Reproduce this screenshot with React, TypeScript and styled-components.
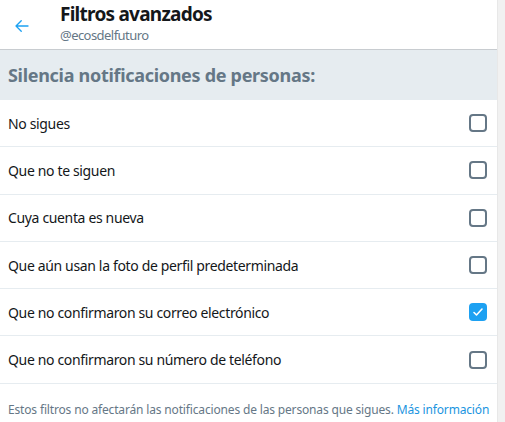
import React from "react";
import styled, { createGlobalStyle } from "styled-components";

const Global = createGlobalStyle`
  html, body { margin: 0; padding: 0; background: #fff; }
  body { font-family: "Noto Sans", "Open Sans", sans-serif; overflow: hidden; }
  * { box-sizing: border-box; }
`;

const Frame = styled.div`
  display: flex;
  width: 505px;
  height: 422px;
`;

const Main = styled.div`
  flex: 1;
  display: flex;
  flex-direction: column;
  min-width: 0;
  & > * { flex-shrink: 0; }
`;

const Scrollbar = styled.div`
  width: 8px;
  background: #f1f1f1;
  border-left: 1px solid #e8e8e8;
`;

const Header = styled.header`
  display: flex;
  align-items: center;
  height: 50px;
  border-bottom: 1px solid #c8ccd0;
  padding-left: 10px;
`;

const BackButton = styled.div`
  width: 24px;
  height: 24px;
  display: flex;
  align-items: center;
  justify-content: center;
  margin-right: 26px;
  margin-top: 2px;
`;

const TitleBlock = styled.div`
  display: flex;
  flex-direction: column;
  align-self: flex-start;
  padding-top: 2px;
`;

const Title = styled.div`
  font-size: 19px;
  font-weight: 700;
  color: #14171a;
  line-height: 24px;
  letter-spacing: -0.75px;
`;

const Handle = styled.div`
  font-size: 13px;
  color: #657786;
  line-height: 18px;
  letter-spacing: -0.55px;
`;

const SectionHead = styled.div`
  background: #e6ecf0;
  height: 50px;
  display: flex;
  align-items: center;
  padding-left: 8px;
  font-size: 18px;
  font-weight: 700;
  color: #657786;
  letter-spacing: -0.3px;
`;

const Row = styled.div`
  display: flex;
  align-items: center;
  justify-content: space-between;
  height: 47.3px;
  border-bottom: 1px solid #e6ecf0;
  padding: 0 10px 0 8px;
  font-size: 14px;
  color: #14171a;
  letter-spacing: -0.35px;
`;

const Box = styled.div<{ $checked?: boolean }>`
  width: 18px;
  height: 18px;
  border-radius: 4px;
  border: ${(p) => (p.$checked ? "none" : "2px solid #657786")};
  background: ${(p) => (p.$checked ? "#1da1f2" : "#fff")};
  display: flex;
  align-items: center;
  justify-content: center;
`;

const Footer = styled.div`
  padding: 17px 8px;
  font-size: 12px;
  color: #657786;
  white-space: nowrap;
  letter-spacing: -0.16px;
`;

const Link = styled.span`
  color: #1b95e0;
`;

const items = [
  { label: "No sigues", checked: false },
  { label: "Que no te siguen", checked: false },
  { label: "Cuya cuenta es nueva", checked: false },
  { label: "Que aún usan la foto de perfil predeterminada", checked: false },
  { label: "Que no confirmaron su correo electrónico", checked: true },
  { label: "Que no confirmaron su número de teléfono", checked: false },
];

export default function App() {
  return (
    <>
      <Global />
      <Frame>
        <Main>
          <Header>
            <BackButton>
              <svg width="18" height="18" viewBox="0 0 24 24" fill="none" stroke="#1da1f2" strokeWidth="1.8" strokeLinecap="round" strokeLinejoin="round">
                <path d="M20 12H4M11 5l-7 7 7 7" />
              </svg>
            </BackButton>
            <TitleBlock>
              <Title>Filtros avanzados</Title>
              <Handle>@ecosdelfuturo</Handle>
            </TitleBlock>
          </Header>
          <SectionHead>Silencia notificaciones de personas:</SectionHead>
          {items.map((it) => (
            <Row key={it.label}>
              <span>{it.label}</span>
              <Box $checked={it.checked}>
                {it.checked && (
                  <svg width="12" height="12" viewBox="0 0 12 12" fill="none" stroke="#fff" strokeWidth="1.6" strokeLinecap="round" strokeLinejoin="round">
                    <path d="M2 6.5l2.5 2.5L10 3" />
                  </svg>
                )}
              </Box>
            </Row>
          ))}
          <Footer>
            Estos filtros no afectarán las notificaciones de las personas que sigues. <Link>Más información</Link>
          </Footer>
        </Main>
        <Scrollbar />
      </Frame>
    </>
  );
}
